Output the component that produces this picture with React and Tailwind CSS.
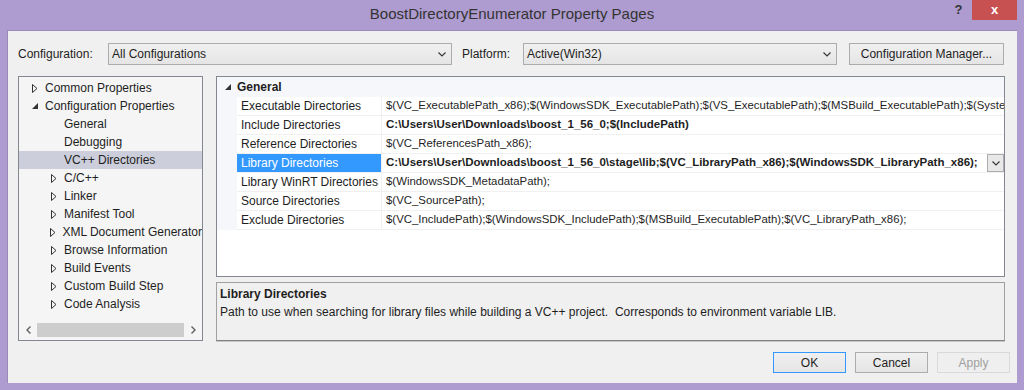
import React from "react";

const font = { fontFamily: '"Liberation Sans", Arial, sans-serif' };

function Chevron({ className = "" }) {
  return (
    <svg width="8" height="5" viewBox="0 0 8 5" className={className}>
      <path d="M0.5 0.5 L4 4 L7.5 0.5" fill="none" stroke="#333" strokeWidth="1.1" />
    </svg>
  );
}

function Collapsed() {
  return (
    <svg width="6" height="9" viewBox="0 0 6 9">
      <path d="M0.5 0.5 L5 4.5 L0.5 8.5 Z" fill="none" stroke="#333" strokeWidth="1" />
    </svg>
  );
}

function Expanded() {
  return (
    <svg width="6" height="6" viewBox="0 0 6 6">
      <path d="M6 0 L6 6 L0 6 Z" fill="#333" />
    </svg>
  );
}

function TreeRow({ label, level, state, selected }) {
  return (
    <div
      className={`flex h-[18px] items-center ${selected ? "bg-[#cccedb]" : ""}`}
    >
      <div className={level === 0 ? "w-[13px]" : "w-[32px]"} />
      <div className="flex w-[13px] items-center">
        {state === "c" && <Collapsed />}
        {state === "e" && <Expanded />}
      </div>
      <span className="whitespace-nowrap text-[12px] text-[#1e1e1e]">{label}</span>
    </div>
  );
}

const tree = [
  ["Common Properties", 0, "c"],
  ["Configuration Properties", 0, "e"],
  ["General", 1, ""],
  ["Debugging", 1, ""],
  ["VC++ Directories", 1, "", true],
  ["C/C++", 1, "c"],
  ["Linker", 1, "c"],
  ["Manifest Tool", 1, "c"],
  ["XML Document Generator", 1, "c"],
  ["Browse Information", 1, "c"],
  ["Build Events", 1, "c"],
  ["Custom Build Step", 1, "c"],
  ["Code Analysis", 1, "c"],
];

const props = [
  ["Executable Directories", "$(VC_ExecutablePath_x86);$(WindowsSDK_ExecutablePath);$(VS_ExecutablePath);$(MSBuild_ExecutablePath);$(System", false],
  ["Include Directories", "C:\\Users\\User\\Downloads\\boost_1_56_0;$(IncludePath)", true],
  ["Reference Directories", "$(VC_ReferencesPath_x86);", false],
  ["Library Directories", "C:\\Users\\User\\Downloads\\boost_1_56_0\\stage\\lib;$(VC_LibraryPath_x86);$(WindowsSDK_LibraryPath_x86);", true, true],
  ["Library WinRT Directories", "$(WindowsSDK_MetadataPath);", false],
  ["Source Directories", "$(VC_SourcePath);", false],
  ["Exclude Directories", "$(VC_IncludePath);$(WindowsSDK_IncludePath);$(MSBuild_ExecutablePath);$(VC_LibraryPath_x86);", false],
];

function Select({ value, width }) {
  return (
    <div
      className={`flex h-[22px] items-center justify-between border border-[#acacac] bg-gradient-to-b from-[#f0f0f0] to-[#e5e5e5] pl-[3px] pr-[5px] ${width}`}
    >
      <span className="text-[12px] text-[#1e1e1e]">{value}</span>
      <Chevron />
    </div>
  );
}

function Button({ children, variant }) {
  const cls =
    variant === "default"
      ? "border-[#3399ff] text-[#1e1e1e] bg-gradient-to-b from-[#f0f0f0] to-[#e5e5e5]"
      : variant === "disabled"
      ? "border-[#d9d9d9] text-[#a0a0a0] bg-[#efefef]"
      : "border-[#acacac] text-[#1e1e1e] bg-gradient-to-b from-[#f0f0f0] to-[#e5e5e5]";
  return (
    <div className={`flex h-[21px] w-[73px] items-center justify-center border text-[12px] ${cls}`}>
      {children}
    </div>
  );
}

export default function App() {
  return (
    <div className="flex h-[390px] w-[1024px] flex-col bg-[#ae9bcf]" style={font}>
      {/* Title bar */}
      <div className="grid h-[30px] grid-cols-[79px_1fr_79px]">
        <div />
        <div className="flex items-center justify-center pb-[1px] text-[15px] text-[#333]">
          BoostDirectoryEnumerator Property Pages
        </div>
        <div className="flex items-start">
          <div className="flex h-[20px] w-[27px] items-center justify-center text-[13px] font-bold text-[#333]">?</div>
          <div className="flex h-[20px] w-[45px] items-center justify-center bg-[#c75050] text-[13px] font-bold text-white">
            x
          </div>
        </div>
      </div>

      {/* Client area */}
      <div className="mx-[7px] flex h-[353px] flex-col border-l border-t border-[#9a8ab8] bg-[#f0f0f0]">
        {/* Config row */}
        <div className="ml-[10px] mt-[12px] flex h-[22px] items-center">
          <span className="w-[90px] text-[12px] text-[#1e1e1e]">Configuration:</span>
          <Select value="All Configurations" width="w-[344px]" />
          <span className="ml-[10px] w-[61px] text-[12px] text-[#1e1e1e]">Platform:</span>
          <Select value="Active(Win32)" width="w-[314px]" />
          <div className="ml-[12px] flex h-[22px] w-[155px] items-center justify-center border border-[#acacac] bg-gradient-to-b from-[#f0f0f0] to-[#e5e5e5] text-[12px] text-[#1e1e1e]">
            Configuration Manager...
          </div>
        </div>

        {/* Main */}
        <div className="ml-[10px] mt-[11px] flex h-[265px]">
          {/* Tree */}
          <div className="flex w-[185px] flex-col border border-[#828790] bg-[#f5f5f5]">
            <div className="flex-1 overflow-hidden pt-[2px]">
              {tree.map(([l, lv, st, sel]) => (
                <TreeRow key={l} label={l} level={lv} state={st} selected={sel} />
              ))}
            </div>
            <div className="mb-[2px] flex h-[17px] items-center">
              <div className="flex w-[18px] items-center justify-center">
                <svg width="5" height="8" viewBox="0 0 5 8">
                  <path d="M4.5 0.5 L1 4 L4.5 7.5" fill="none" stroke="#606060" strokeWidth="1.4" />
                </svg>
              </div>
              <div className="h-[14px] w-[147px] bg-[#cdcdcd]" />
              <div className="flex flex-1 items-center justify-center">
                <svg width="5" height="8" viewBox="0 0 5 8">
                  <path d="M0.5 0.5 L4 4 L0.5 7.5" fill="none" stroke="#606060" strokeWidth="1.4" />
                </svg>
              </div>
            </div>
          </div>

          {/* Right column */}
          <div className="ml-[13px] flex w-[789px] flex-col">
            <div className="h-[201px] overflow-hidden border border-[#828790] bg-white">
              <div className="flex h-[20px] items-center bg-[#f5f7fb]">
                <div className="flex w-[20px] justify-end pr-[6px]">
                  <Expanded />
                </div>
                <span className="text-[12px] font-bold text-[#1e1e1e]">General</span>
              </div>
              <div className="flex">
                <div className="w-[20px] shrink-0 bg-[#f5f7fb]" />
                <div className="flex-1 overflow-hidden">
                  {props.map(([n, v, bold, sel]) => (
                    <div key={n} className="flex h-[19px] border-b border-[#f0f0f0]">
                      <div
                        className={`flex w-[145px] shrink-0 items-center border-r border-[#f0f0f0] pl-[4px] text-[12px] ${
                          sel ? "bg-[#3399ff] text-white" : "text-[#1e1e1e]"
                        }`}
                      >
                        {n}
                      </div>
                      <div className="flex min-w-0 flex-1 items-center pl-[4px]">
                        <span
                          className={`overflow-hidden whitespace-nowrap text-[#1e1e1e] ${
                            bold ? "text-[11.5px] font-bold" : "text-[11.4px]"
                          }`}
                        >
                          {v}
                        </span>
                        {sel && (
                          <div className="ml-auto flex h-[18px] w-[17px] shrink-0 items-center justify-center border border-[#acacac] bg-[#e8e8e8]">
                            <Chevron />
                          </div>
                        )}
                      </div>
                    </div>
                  ))}
                </div>
              </div>
            </div>
            <div className="mt-[5px] h-[59px] border border-[#a0a0a0] border-b-[#808080] bg-[#f0f0f0] px-[3px] pt-[3px] shadow-[0_1px_0_#c8c8c8]">
              <div className="text-[12px] font-bold leading-[16px] text-[#1e1e1e]">Library Directories</div>
              <div className="mt-[2px] whitespace-pre text-[12px] leading-[16px] text-[#1e1e1e]">
                {"Path to use when searching for library files while building a VC++ project.  Corresponds to environment variable LIB."}
              </div>
            </div>
          </div>
        </div>

        {/* Buttons */}
        <div className="mr-[7px] mt-[11px] flex justify-end gap-[9px]">
          <Button variant="default">OK</Button>
          <Button>Cancel</Button>
          <Button variant="disabled">Apply</Button>
        </div>
      </div>
    </div>
  );
}
